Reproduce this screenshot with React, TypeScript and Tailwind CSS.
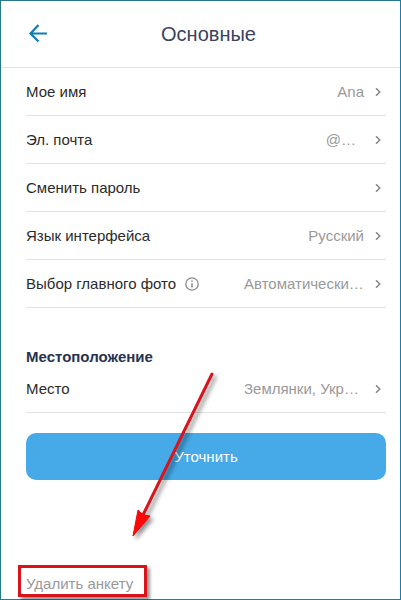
import { clsx } from "clsx";

interface Setting {
  label: string;
  value?: string;
  valueClass?: string;
  info?: boolean;
}

const settings: Setting[] = [
  { label: "Мое имя", value: "Ana" },
  { label: "Эл. почта", value: "@…", valueClass: "pr-2" },
  { label: "Сменить пароль" },
  { label: "Язык интерфейса", value: "Русский" },
  { label: "Выбор главного фото", value: "Автоматически…", valueClass: "w-[120px] text-left", info: true },
];

const place: Setting = { label: "Место", value: "Землянки, Укр…", valueClass: "w-[120px] text-left" };

function BackIcon() {
  return (
    <svg width="20" height="20" viewBox="0 0 20 20" fill="none" stroke="#0f7db5" strokeWidth="2.2" aria-hidden="true">
      <path d="M20 9.5H4M11.5 1L3.5 9.5L11.5 17.5" />
    </svg>
  );
}

function ChevronIcon() {
  return (
    <svg width="6" height="10" viewBox="0 0 6 10" fill="none" stroke="#858585" strokeWidth="1.5" aria-hidden="true">
      <path d="M1 1.2L4.8 5L1 8.8" />
    </svg>
  );
}

function InfoIcon() {
  return (
    <svg width="14" height="14" viewBox="0 0 14 14" fill="none" stroke="#8b8b8b" aria-hidden="true">
      <circle cx="7" cy="7" r="6.2" strokeWidth="1.3" />
      <path d="M7 6.2V10.4M7 3.6V5" strokeWidth="1.5" />
    </svg>
  );
}

function SettingRow({ label, value, valueClass, info }: Setting) {
  return (
    <button
      type="button"
      className="flex h-12 w-full items-center border-b border-[#e0e1e3] pr-[5px] text-left"
    >
      <span className="text-[#2b2b2b]">{label}</span>
      {info && (
        <span className="ml-[9px]">
          <InfoIcon />
        </span>
      )}
      <span className={clsx("ml-auto shrink-0 whitespace-nowrap text-[#999999]", valueClass)}>{value}</span>
      <span className="ml-[11px]">
        <ChevronIcon />
      </span>
    </button>
  );
}

// Red pointer that runs across the button down to the delete link
function Pointer() {
  return (
    <svg
      className="pointer-events-none absolute bottom-12 left-[119px] drop-shadow-[3px_3px_2px_rgba(0,0,0,0.45)]"
      width="110"
      height="180"
      viewBox="0 0 110 180"
      aria-hidden="true"
    >
      <path d="M92 3L23 144" stroke="#d9141b" strokeWidth="3" strokeLinecap="round" />
      <path d="M13 165L18 139L23 144L30 145Z" fill="#ff0505" stroke="#ee0a0a" strokeWidth="1" />
    </svg>
  );
}

export default function App() {
  return (
    <div className="relative flex min-h-screen flex-col border border-t-[#267986] border-r-[#177ead] border-b-[#177ead] border-l-[#267986] bg-white font-['Liberation_Sans',Arial,sans-serif] text-[15px] leading-[25px]">
      <header className="grid h-[67px] grid-cols-[24px_1fr_24px] items-center border-b border-[#dde4e6] pr-[10px] pl-[26px]">
        <button type="button" aria-label="Назад">
          <BackIcon />
        </button>
        <h1 className="text-center text-[20px] text-[#3b4260]">Основные</h1>
      </header>

      <main className="flex flex-1 flex-col pr-[14px] pl-[25px]">
        {settings.map((s) => (
          <SettingRow key={s.label} {...s} />
        ))}

        <h2 className="mt-10 leading-[17px] font-bold text-[#283350]">Местоположение</h2>
        <SettingRow {...place} />

        <button
          type="button"
          className="mt-5 h-[47px] w-full rounded-[10px] bg-[#46a9e8] font-medium text-white"
        >
          Уточнить
        </button>

        <a
          href="#delete"
          className="mt-auto mb-[2px] -ml-2 flex h-8 w-fit items-center border-[3px] border-[#d8131a] pt-1 pr-[11px] pl-[5px] text-[#999999] shadow-[3px_3px_3px_rgba(0,0,0,0.4)]"
        >
          Удалить анкету
        </a>
      </main>
      <Pointer />
    </div>
  );
}
